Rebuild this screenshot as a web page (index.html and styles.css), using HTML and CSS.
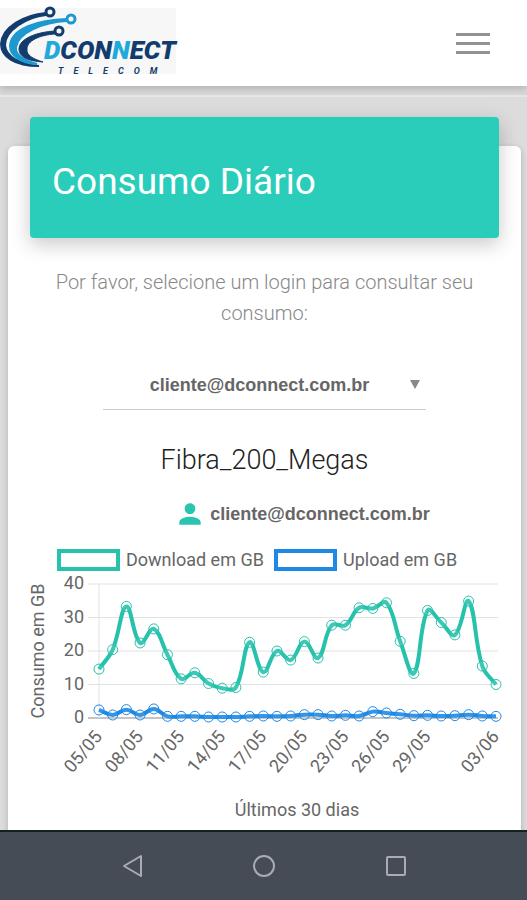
FILE: index.html
```html
<!DOCTYPE html>
<html lang="pt-BR">
<head>
    <meta charset="UTF-8">
    <meta name="viewport" content="width=device-width, initial-scale=1.0">
    <title>Consumo Diário</title>
    <link rel="stylesheet" href="styles.css">
</head>
<body>
    <header class="topbar">
        <a class="logo" href="#" aria-label="DConnect Telecom">
            <svg width="177" height="70" viewBox="0 0 177 70">
                <rect width="176" height="66" fill="#f7f7f7"/>
                <g fill="none" stroke-linecap="round">
                    <path d="M46 5C24 7 2 19 1 36c0 13 14 22 38 22C20 56 6 49 5 37 5 23 26 9 46 7z" fill="#123c6e" stroke="#123c6e" stroke-width="2"/>
                    <path d="M67 11C38 12 11 20 10 38c0 10 11 17 27 18C23 52 15 46 16 39c2-14 27-25 51-26z" fill="#1c9ad0" stroke="#1c9ad0" stroke-width="2"/>
                    <path d="M55 23C36 24 19 31 19 41c0 8 9 12 24 13-10-3-17-7-16-13 0-8 12-14 28-15z" fill="#123c6e" stroke="#123c6e" stroke-width="1"/>
                    <circle cx="50" cy="4" r="4" fill="#f7f7f7" stroke="#123c6e" stroke-width="3"/>
                    <circle cx="71" cy="11" r="4" fill="#f7f7f7" stroke="#1c9ad0" stroke-width="3"/>
                    <circle cx="59" cy="23" r="4" fill="#f7f7f7" stroke="#123c6e" stroke-width="3"/>
                </g>
                <text class="logo-name" x="44" y="51"><tspan class="logo-light">D</tspan>CON<tspan class="logo-light">N</tspan>ECT</text>
                <text class="logo-sub" x="58" y="66">TELECOM</text>
            </svg>
        </a>
        <button class="menu" type="button" aria-label="Menu">
            <span></span>
            <span></span>
            <span></span>
        </button>
    </header>

    <main class="content">
        <section class="card">
            <div class="card-header">
                <h1>Consumo Diário</h1>
            </div>
            <div class="card-body">
                <label class="hint" for="login">Por favor, selecione um login para consultar seu consumo:</label>
                <div class="select-box">
                    <select id="login">
                        <option>cliente@dconnect.com.br</option>
                    </select>
                </div>

                <h2>Fibra_200_Megas</h2>
                <div class="user">
                    <svg width="32" height="32" viewBox="0 0 24 24" fill="#29c5b1">
                        <path d="M12 12c2.21 0 4-1.79 4-4s-1.79-4-4-4-4 1.79-4 4 1.79 4 4 4zm0 2c-2.67 0-8 1.34-8 4v2h16v-2c0-2.66-5.33-4-8-4z"/>
                    </svg>
                    <span>cliente@dconnect.com.br</span>
                </div>

                <svg id="chart" class="chart" viewBox="0 0 481 290"></svg>
            </div>
        </section>
    </main>

    <nav class="navbar">
        <button type="button" aria-label="Voltar">
            <svg width="24" height="24" viewBox="0 0 24 24"><path d="M21 2v20L4 12z"/></svg>
        </button>
        <button type="button" aria-label="Início">
            <svg width="24" height="24" viewBox="0 0 24 24"><circle cx="12" cy="12" r="10"/></svg>
        </button>
        <button type="button" aria-label="Recentes">
            <svg width="24" height="24" viewBox="0 0 24 24"><rect x="3" y="3" width="18" height="18" rx="1"/></svg>
        </button>
    </nav>

    <script src="chart.js"></script>
</body>
</html>
```

FILE: styles.css
```css
* {
    box-sizing: border-box;
}
body {
    display: flex;
    flex-direction: column;
    height: 100vh;
    margin: 0;
    background-color: #dcdcdc;
    color: #666;
    font-family: Roboto, "Liberation Sans", sans-serif;
    overflow: hidden;
}
button {
    padding: 0;
    border: none;
    background: none;
    cursor: pointer;
}

/* topo */
.topbar {
    display: flex;
    flex: none;
    justify-content: space-between;
    align-items: center;
    height: 86px;
    padding-right: 36px;
    background-color: #fff;
    box-shadow: 0 2px 8px rgba(0, 0, 0, 0.2);
    z-index: 1;
}
.logo svg {
    display: block;
    overflow: visible;
}
.logo-name {
    font-size: 26px;
    font-weight: 900;
    font-style: italic;
    fill: #123c6e;
}
.logo-light {
    fill: #1fa9dc;
}
.logo-sub {
    font-size: 9px;
    font-weight: 700;
    font-style: italic;
    letter-spacing: 10px;
    fill: #123c6e;
}
.menu {
    display: flex;
    flex-direction: column;
    gap: 6px;
    width: 36px;
    padding: 0 1px;
}
.menu span {
    height: 3px;
    background-color: #929292;
}

/* cartão */
.content {
    flex: 1;
    min-height: 0;
    padding: 51px 6px 0 8px;
    border-top: 9px solid #d8d8d8;
    box-shadow: inset 0 2px 0 #e6e6e6;
    overflow: hidden;
}
.card {
    min-height: 800px;
    background-color: #fff;
    border-radius: 6px;
    box-shadow: 0 2px 6px rgba(0, 0, 0, 0.2);
}
.card-header {
    display: flex;
    align-items: center;
    position: relative;
    top: -29px;
    height: 121px;
    margin: 0 22px;
    padding: 8px 22px 0;
    background-color: #2accba;
    color: #fff;
    border-radius: 4px;
    box-shadow: 0 6px 20px rgba(0, 0, 0, 0.22);
}
h1 {
    margin: 0;
    font-size: 37px;
    font-weight: 400;
}
.card-body {
    padding: 0 16px;
    text-align: center;
}
.hint {
    display: block;
    padding: 0 20px;
    color: #888;
    font-size: 20px;
    font-weight: 300;
    line-height: 31px;
}
.select-box {
    position: relative;
    width: 67%;
    margin: 32px auto;
}
.select-box::after {
    content: "";
    position: absolute;
    top: 19px;
    right: 6px;
    border: 5px solid transparent;
    border-top: 9px solid #888;
    border-bottom: none;
    pointer-events: none;
}
select {
    display: block;
    width: 100%;
    height: 49px;
    padding: 0 10px 0 0;
    border: none;
    border-bottom: 1px solid #ccc;
    border-radius: 0;
    background: none;
    color: #666;
    font: bold 18px "Liberation Sans", Arial, sans-serif;
    text-align-last: center;
    appearance: none;
}
h2 {
    margin: 0;
    color: #222;
    font-size: 27px;
    font-weight: 300;
    line-height: 36px;
}
.user {
    display: flex;
    justify-content: center;
    align-items: center;
    gap: 4px;
    margin-top: 20px;
    padding-left: 75px;
    font: bold 18px "Liberation Sans", Arial, sans-serif;
}

/* gráfico */
.chart {
    display: block;
    width: 100%;
    margin-top: 14px;
    overflow: visible;
}
.chart text {
    fill: #666;
    font-size: 18px;
}
.grid {
    stroke: #e2e2e2;
    stroke-width: 1;
}
.zero {
    stroke: #c4c4c4;
    stroke-width: 2;
}
.serie {
    fill: none;
    stroke-width: 4;
}
.point {
    fill: rgba(255, 255, 255, 0.1);
    stroke-width: 1;
}
.download {
    stroke: #26c2ac;
}
.upload {
    stroke: #1e88e5;
}
.legend-box {
    fill: #fff;
    stroke-width: 4;
}

/* barra do sistema */
.navbar {
    display: flex;
    flex: none;
    justify-content: center;
    gap: 108px;
    height: 70px;
    background-color: #454c55;
    border-top: 2px solid #15211f;
    z-index: 1;
}
.navbar svg {
    display: block;
    fill: none;
    stroke: #a9adb1;
    stroke-width: 2;
    stroke-linejoin: round;
}
```

FILE: chart.js
```js
const download = [14.6, 20.4, 33.3, 22.4, 26.6, 18.9, 11.7, 13.5, 10.3, 8.9, 9.1, 22.6, 13.7, 20, 17.3, 22.8, 17.9, 27.7, 27.7, 32.9, 32.7, 34.4, 22.9, 13.3, 32.1, 28.5, 24.8, 34.9, 15.5, 10];
const upload = [2.4, 0.9, 2.5, 0.9, 2.7, 0.5, 0.5, 0.5, 0.3, 0.3, 0.3, 0.5, 0.6, 0.5, 0.6, 1, 1, 0.6, 0.8, 0.6, 1.9, 1.5, 1.1, 0.7, 0.8, 0.6, 0.7, 1, 0.6, 0.5];
const labels = { 0: '05/05', 3: '08/05', 6: '11/05', 9: '14/05', 12: '17/05', 15: '20/05', 18: '23/05', 21: '26/05', 24: '29/05', 29: '03/06' };

const left = 75, right = 472, top0 = 40, bottom = 174;
const px = i => left + i * (right - left) / 29;
const py = v => bottom - v * (bottom - top0) / 40;

// curva suavizada
function curve(data) {
  const p = data.map((v, i) => [px(i), py(v)]);
  const ctrl = p.map((c, i) => {
    const a = p[i - 1] || c;
    const b = p[i + 1] || c;
    const d1 = Math.hypot(c[0] - a[0], c[1] - a[1]);
    const d2 = Math.hypot(b[0] - c[0], b[1] - c[1]);
    const f1 = 0.4 * d1 / (d1 + d2);
    const f2 = 0.4 * d2 / (d1 + d2);
    return [c[0] - f1 * (b[0] - a[0]), c[1] - f1 * (b[1] - a[1]), c[0] + f2 * (b[0] - a[0]), c[1] + f2 * (b[1] - a[1])];
  });
  let d = `M${p[0]}`;
  for (let i = 1; i < p.length; i++) {
    d += `C${ctrl[i - 1][2]},${ctrl[i - 1][3]} ${ctrl[i][0]},${ctrl[i][1]} ${p[i]}`;
  }
  return d;
}

function serie(data, name) {
  const points = data.map((v, i) => `<circle class="point ${name}" cx="${px(i)}" cy="${py(v)}" r="5"/>`).join('');
  return `<path class="serie ${name}" d="${curve(data)}"/>${points}`;
}

let svg = '';

// legenda
svg += '<rect class="legend-box download" x="35" y="7" width="59" height="18"/><text x="102" y="22">Download em GB</text>';
svg += '<rect class="legend-box upload" x="252" y="7" width="59" height="18"/><text x="319" y="22">Upload em GB</text>';

// eixos
for (let v = 0; v <= 40; v += 10) {
  svg += `<line class="${v ? 'grid' : 'zero'}" x1="64" x2="474" y1="${py(v)}" y2="${py(v)}"/>`;
  svg += `<text x="60" y="${py(v) + 5}" text-anchor="end">${v}</text>`;
}
svg += `<line class="grid" x1="${left}" x2="${left}" y1="${top0}" y2="${bottom}"/>`;
for (const i in labels) {
  svg += `<text transform="translate(${px(+i) + 4} ${bottom + 19}) rotate(-50)" text-anchor="end">${labels[i]}</text>`;
}
svg += '<text transform="translate(20 107) rotate(-90)" text-anchor="middle">Consumo em GB</text>';
svg += '<text x="273" y="272" text-anchor="middle">Últimos 30 dias</text>';

svg += serie(upload, 'upload') + serie(download, 'download');
document.getElementById('chart').innerHTML = svg;
```
